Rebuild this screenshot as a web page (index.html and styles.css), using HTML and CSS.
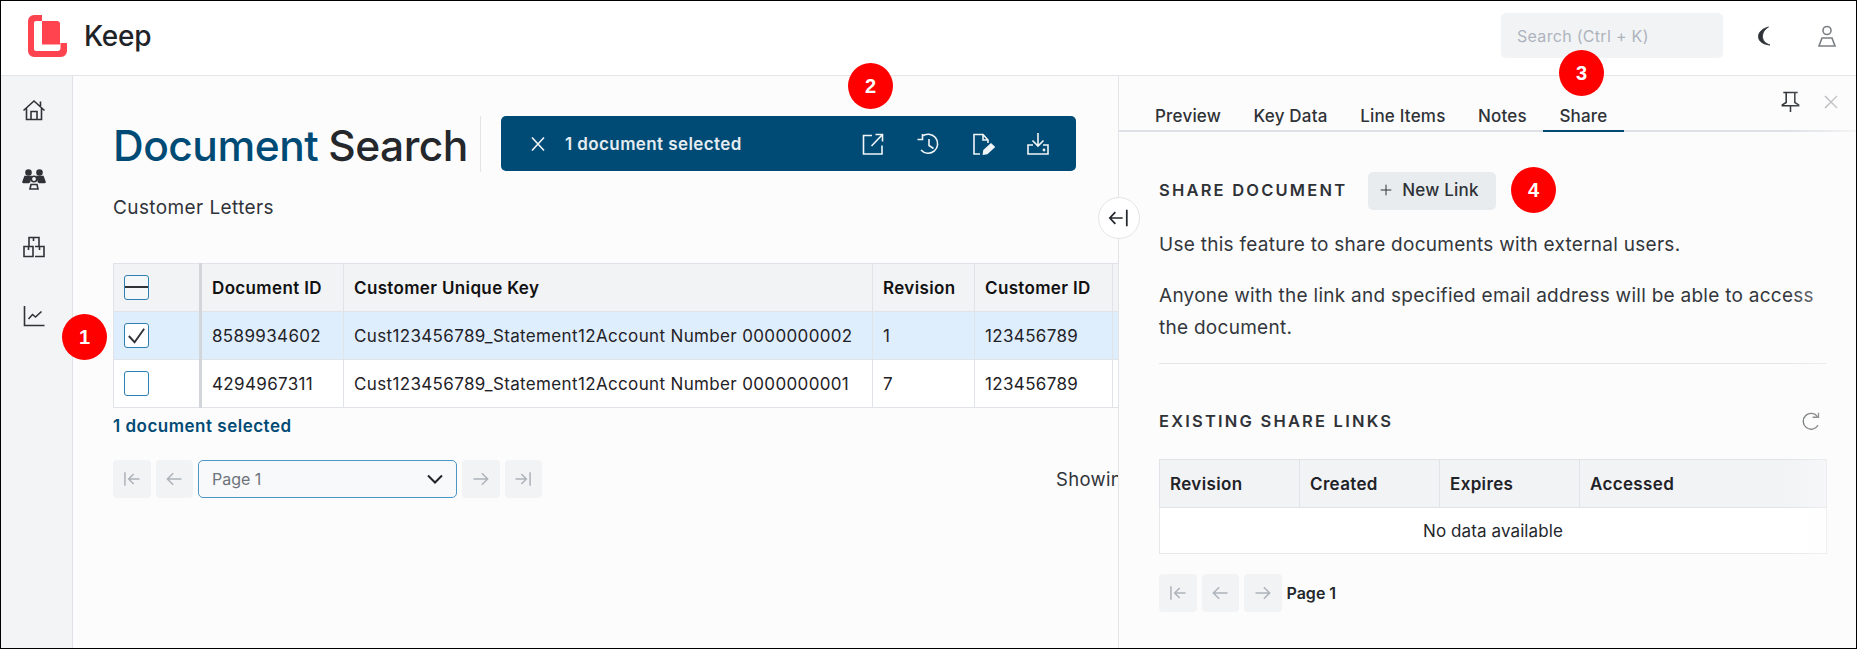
FILE: index.html
```html
<!DOCTYPE html>
<html lang="en">
<head>
<meta charset="utf-8">
<title>Keep - Document Search</title>
<link rel="stylesheet" href="styles.css">
</head>
<body>
<div class="frame">
  <header class="topbar">
    <svg class="logo" viewBox="28 14 39 42"><path fill="#ff444f" d="M42 14H34a6 6 0 0 0-6 6V50a6 6 0 0 0 6 6H61a6 6 0 0 0 6-6V42H60.500V47a3 3 0 0 1-3 3H36a2 2 0 0 1-2-2V22a2 2 0 0 1 2-2H42ZM42 20H57a3 3 0 0 1 3 3V43.500H42Z"/></svg>
    <span class="brand">Keep</span>
    <div class="search">Search (Ctrl + K)</div>
    <svg class="ico moon" viewBox="0 0 24 24"><path d="M15.500 3C9.500 4.500 5.500 8 5.500 12.500S9.500 20.500 17 21C12.500 19.500 9.500 16.500 9.500 12.500S11.500 5.500 15.500 3Z"/></svg>
    <svg class="ico user" viewBox="0 0 24 24"><circle cx="12" cy="6.500" r="4"/><path d="M7 14H17L20 22H4Z"/></svg>
  </header>
  <div class="workspace">
    <nav class="sidebar">
      <svg class="ico nav" viewBox="0 0 24 24"><path d="M1.500 12.500L12 3L22.500 12.500M4.500 10.500V21.500H19.500V10.500M9 21.500V13.500H15V21.500M18.500 8V3.500"/></svg>
      <svg class="ico nav" viewBox="0 0 24 24"><circle cx="6.500" cy="5.500" r="2.500" class="fill"/><circle cx="17.500" cy="5.500" r="2.500" class="fill"/><path class="fill" d="M1 15L3 9.500H9L7.500 15ZM23 15L21 9.500H15L16.500 15Z"/><circle cx="12" cy="12" r="2.700"/><path d="M8 22L9 17.500H15L16 22ZM1 15.500H7M17 15.500H23"/></svg>
      <svg class="ico nav" viewBox="0 0 24 24"><path d="M7 11V2.500H17V11M2 21.500V11.500H11V21.500ZM13 11.500H22V21.500H13M11.500 2.500V6M6.500 11.500V15M17.500 11.500V15"/></svg>
      <svg class="ico nav" viewBox="0 0 24 24"><path d="M2.500 2V21.500H22.500M6.500 15L10.500 10.500L13.500 13L19.500 7.500"/></svg>
    </nav>
    <main class="content">
      <div class="title-row">
        <h1 class="title"><span class="accent">Document</span> <span>Search</span></h1>
        <div class="action-bar">
          <svg class="ico light close" viewBox="0 0 24 24"><path d="M6 5.500L18 18.500M18 5.500L6 18.500"/></svg>
          <span class="action-text">1 document selected</span>
          <div class="action-icons">
            <svg class="ico light" viewBox="0 0 24 24"><path d="M11 3.500H2.500V22H21V13.500M10.500 14L21.500 2.500M14.500 2.500H21.500V9.500"/></svg>
            <svg class="ico light" viewBox="0 0 24 24"><path d="M6 4.500A9.500 9.500 0 1 1 5 18M6.500 2V7.500H1.500M13 7V13.500L17.500 16.500"/></svg>
            <svg class="ico light" viewBox="0 0 24 24"><path d="M9 22H3V2.500H12L17 8V11M12 2.500V8H17"/><path class="fill" d="M12.500 22L13 18.500L20 12L23 15L16 21.500Z"/></svg>
            <svg class="ico light" viewBox="0 0 24 24"><path d="M12 1V14M6.500 8.500L12 14L17.500 8.500M7 13H2V22H22V13H17"/><circle cx="18" cy="18" r=".6"/></svg>
          </div>
        </div>
      </div>
      <p class="subtitle">Customer Letters</p>
      <div class="table-clip">
        <table class="doc-table">
          <colgroup>
            <col class="c-chk"><col class="c-id"><col class="c-key"><col class="c-rev"><col class="c-cust"><col class="c-rest">
          </colgroup>
          <thead>
            <tr>
              <th class="chk-cell"><span class="check"><span class="dash"></span></span></th>
              <th>Document ID</th><th>Customer Unique Key</th><th>Revision</th><th>Customer ID</th><th></th>
            </tr>
          </thead>
          <tbody>
            <tr class="selected">
              <td class="chk-cell"><span class="check"><svg class="tick" viewBox="0 0 24 24"><path d="M4 12.500L10 19L20 5"/></svg></span></td>
              <td>8589934602</td><td>Cust123456789_Statement12Account Number 0000000002</td><td>1</td><td>123456789</td><td></td>
            </tr>
            <tr>
              <td class="chk-cell"><span class="check"></span></td>
              <td>4294967311</td><td>Cust123456789_Statement12Account Number 0000000001</td><td>7</td><td>123456789</td><td></td>
            </tr>
          </tbody>
        </table>
      </div>
      <p class="selected-note">1 document selected</p>
      <div class="pager-row">
        <span class="pg-btn"><svg class="ico pg" viewBox="0 0 24 24"><path d="M3.500 4V20M21 12H8M14 6L8 12L14 18"/></svg></span>
        <span class="pg-btn"><svg class="ico pg" viewBox="0 0 24 24"><path d="M21 12H4M11 5L4 12L11 19"/></svg></span>
        <div class="page-select"><span>Page 1</span><svg class="ico chev" viewBox="0 0 24 24"><path d="M5 8.500L12 15.500L19 8.500"/></svg></div>
        <span class="pg-btn"><svg class="ico pg" viewBox="0 0 24 24"><path d="M3 12H20M13 5L20 12L13 19"/></svg></span>
        <span class="pg-btn"><svg class="ico pg" viewBox="0 0 24 24"><path d="M20.500 4V20M3 12H16M10 6L16 12L10 18"/></svg></span>
        <span class="showing">Showing</span>
      </div>
    </main>
    <aside class="panel">
      <div class="tabs">
        <span class="tab">Preview</span>
        <span class="tab">Key Data</span>
        <span class="tab">Line Items</span>
        <span class="tab">Notes</span>
        <span class="tab active">Share</span>
        <div class="panel-tools">
          <svg class="ico pin" viewBox="0 0 24 24"><path d="M4.500 2.500H19.500M7.500 2.500V13L3.500 15.500V16.500H20.500V15.500L16.500 13V2.500M12 16.500V23"/></svg>
          <svg class="ico dismiss" viewBox="0 0 24 24"><path d="M4 4L20 20M20 4L4 20"/></svg>
        </div>
      </div>
      <div class="panel-body">
        <div class="section-head">
          <h2 class="section-title">SHARE DOCUMENT</h2>
          <span class="new-link"><svg class="ico plus" viewBox="0 0 24 24"><path d="M12 4V20M4 12H20"/></svg>New Link</span>
        </div>
        <p class="para">Use this feature to share documents with external users.</p>
        <p class="para">Anyone with the link and specified email address will be able to access the document.</p>
        <hr class="rule">
        <div class="links-head">
          <h2 class="section-title">EXISTING SHARE LINKS</h2>
          <svg class="ico refresh" viewBox="0 0 24 24"><path d="M20 7A9.500 9.500 0 1 0 20.500 17M14 7.500H21V2"/></svg>
        </div>
        <table class="links-table">
          <colgroup><col class="l-col"><col class="l-col"><col class="l-col"><col></colgroup>
          <thead><tr><th>Revision</th><th>Created</th><th>Expires</th><th>Accessed</th></tr></thead>
          <tbody><tr><td colspan="4" class="empty">No data available</td></tr></tbody>
        </table>
        <div class="links-pager">
          <span class="pg-btn"><svg class="ico pg" viewBox="0 0 24 24"><path d="M3.500 4V20M21 12H8M14 6L8 12L14 18"/></svg></span>
          <span class="pg-btn"><svg class="ico pg" viewBox="0 0 24 24"><path d="M21 12H4M11 5L4 12L11 19"/></svg></span>
          <span class="pg-btn"><svg class="ico pg" viewBox="0 0 24 24"><path d="M3 12H20M13 5L20 12L13 19"/></svg></span>
          <span class="page-label">Page 1</span>
        </div>
      </div>
      <div class="fade"></div>
    </aside>
  </div>
  <div class="collapse"><svg class="ico arrow" viewBox="0 0 24 24"><path d="M16 12H2M8 5.500L2 12L8 18.500M20.500 3V21"/></svg></div>
  <span class="badge b1">1</span>
  <span class="badge b2">2</span>
  <span class="badge b3">3</span>
  <span class="badge b4">4</span>
</div>
</body>
</html>
```
FILE: styles.css
```css
* { box-sizing: border-box; }
html, body { margin: 0; padding: 0; }
body { font-family: Inter, "Liberation Sans", sans-serif; color: #24272b; background: #fff; }
.frame { position: relative; width: 1857px; height: 649px; border: 1px solid #000; overflow: hidden; display: flex; flex-direction: column; background: #fcfcfc; }

.ico { width: 24px; height: 24px; flex: none; fill: none; stroke: #2f3237; stroke-width: 1.6; }
.ico .fill, .ico.light .fill { fill: currentColor; }

.topbar { flex: none; height: 75px; padding: 0 17px 5px 27px; display: flex; align-items: center; background: #fff; border-bottom: 1px solid #e3e5e8; }
.logo { width: 39px; height: 42px; flex: none; }
.brand { margin-left: 17px; font-size: 28px; font-weight: 550; color: #1f2227; letter-spacing: -.3px; }
.search { margin-left: auto; width: 222px; height: 45px; padding-left: 16px; display: flex; align-items: center; background: #f2f3f5; border-radius: 5px; font-size: 16px; letter-spacing: .3px; color: #adb4bd; }
.moon { margin-left: 30px; fill: #2f3237; stroke-width: .8; }
.user { margin-left: 38px; stroke: #7c7f83; }

.workspace { flex: 1; min-height: 0; display: flex; }
.sidebar { flex: none; width: 72px; padding-top: 22px; display: flex; flex-direction: column; align-items: center; gap: 44.500px; background: #f3f4f6; border-right: 1px solid #dfe2e6; }
.nav { color: #2f3237; margin-right: 6px; }

.content { flex: none; width: 1045px; padding: 40px 0 0 40px; overflow: hidden; }
.title-row { display: flex; height: 56px; align-items: flex-start; }
.title { margin: 0; width: 368px; height: 56px; padding-top: 2px; display: flex; align-items: center; gap: 10px; border-right: 1px solid #e3e5e8; font-size: 42.500px; font-weight: 550; letter-spacing: -.5px; color: #24272b; white-space: nowrap; }
.accent { color: #004b75; }
.action-bar { margin-left: 20px; width: 575px; height: 55px; padding: 0 26px 0 25px; display: flex; align-items: center; background: #004b75; border-radius: 5px; }
.light { stroke: #f1f5f8; color: #f1f5f8; }
.action-text { margin-left: 15px; font-size: 17px; letter-spacing: .4px; font-weight: 600; color: #e4ecf1; }
.action-icons { margin-left: auto; display: flex; gap: 31px; }

.subtitle { margin: 24px 0 0; line-height: 24px; font-size: 19px; letter-spacing: .4px; color: #30343a; }

.table-clip { margin-top: 43px; overflow: hidden; }
.doc-table { width: 1200px; table-layout: fixed; border-collapse: collapse; font-size: 17px; letter-spacing: .35px; }
.c-chk { width: 87px; }
.c-id { width: 143px; }
.c-key { width: 529px; }
.c-rev { width: 102px; }
.c-cust { width: 138px; }
.c-rest { width: 201px; }
.doc-table th, .doc-table td { height: 48px; padding: 0 0 0 10px; text-align: left; border: 1px solid #e0e3e7; white-space: nowrap; color: #1f2227; }
.doc-table th { background: #f2f3f5; font-weight: 600; color: #111; }
.doc-table td { background: #fff; font-weight: 400; }
.doc-table .selected td { background: #dfeefd; }
.doc-table .chk-cell { padding-left: 10px; border-right: 3px solid #d2d5d9; }
.check { display: block; width: 25px; height: 25px; position: relative; border: 1px solid #2d7fb2; border-radius: 3px; background: #fff; }
.doc-table th .check { background: #f6f7f8; }
.dash { position: absolute; left: 0; right: 0; top: 10px; height: 2px; background: #2f3237; }
.tick { display: block; width: 23px; height: 23px; fill: none; stroke: #2f3237; stroke-width: 2; }

.selected-note { margin: 7px 0 0; line-height: 22px; font-size: 17px; letter-spacing: .5px; font-weight: 600; color: #004b75; }

.pager-row { margin-top: 23px; display: flex; gap: 5px; align-items: center; }
.pg-btn { flex: none; width: 37.500px; height: 38px; display: flex; align-items: center; justify-content: center; background: #f2f3f5; border-radius: 4px; }
.pg { width: 20px; height: 20px; stroke: #adb3ba; stroke-width: 1.8; }
.page-select { flex: none; width: 259px; height: 38px; padding: 0 9px 0 13px; display: flex; align-items: center; justify-content: space-between; background: #f8f9fa; border: 1px solid #4a96c4; border-radius: 5px; font-size: 16px; color: #6d737b; }
.chev { width: 24px; height: 24px; stroke: #1f2227; stroke-width: 2; }
.showing { margin-left: 509px; font-size: 18.500px; letter-spacing: .3px; color: #30343a; white-space: nowrap; }

.panel { flex: none; position: relative; width: 738px; background: #fcfcfc; border-left: 1px solid #e3e5e8; overflow: hidden; }
.tabs { height: 56px; padding-left: 20px; display: flex; align-items: flex-end; border-bottom: 2px solid #dde1e6; }
.tab { height: 30px; margin-bottom: -2px; margin-right: .5px; padding: 0 16px; line-height: 29px; border-bottom: 2px solid transparent; font-size: 17px; letter-spacing: .2px; font-weight: 500; color: #2f3237; }
.tab.active { border-bottom-color: #004b75; }
.panel-tools { align-self: flex-start; margin: 14px 16px 0 auto; display: flex; gap: 20px; align-items: center; }
.pin { width: 23px; height: 23px; stroke-width: 1.6; }
.dismiss { width: 18px; height: 18px; stroke: #8a8e93; stroke-width: 1.8; }

.panel-body { padding: 40px 29px 0 40px; }
.section-head { display: flex; align-items: center; height: 38px; gap: 21px; }
.section-head .section-title { margin-bottom: 2px; }
.section-title { margin: 0; font-size: 16.500px; font-weight: 600; letter-spacing: 2.200px; color: #2f3237; white-space: nowrap; }
.new-link { width: 128px; height: 38px; padding: 0 0 2px 10px; display: flex; align-items: center; gap: 8px; background: #e9ecef; border-radius: 5px; font-size: 17px; letter-spacing: .2px; font-weight: 500; color: #2f3237; }
.plus { width: 16px; height: 16px; stroke-width: 1.500; }
.para { margin: 19px 0 0; line-height: 32px; font-size: 19px; letter-spacing: .27px; color: #33373c; }
.rule { margin: 19px 0 0; border: 0; border-top: 1px solid #e3e5e8; }
.links-head { margin-top: 45px; height: 24px; display: flex; align-items: center; justify-content: space-between; padding-right: 6px; }
.refresh { width: 20px; height: 20px; stroke: #5f6367; }
.links-table { margin-top: 26px; width: 668px; table-layout: fixed; border-collapse: collapse; font-size: 17px; letter-spacing: .35px; }
.l-col { width: 140px; }
.links-table th { height: 48px; padding: 0 0 0 10px; text-align: left; background: #f2f3f5; border: 1px solid #e0e3e7; font-weight: 600; color: #1f2227; }
.empty { height: 46px; padding: 0; text-align: center; letter-spacing: .1px; background: #fff; border: 1px solid #e6e8eb; color: #24272b; }
.links-pager { margin-top: 20px; display: flex; gap: 5px; align-items: center; }
.page-label { font-size: 16px; font-weight: 600; color: #24272b; }
.fade { position: absolute; top: 0; bottom: 0; right: 0; width: 70px; pointer-events: none; background: linear-gradient(to right, rgba(252,252,252,0), rgba(252,252,252,.7)); }

.collapse { position: absolute; left: 1097px; top: 196px; width: 42px; height: 42px; display: flex; align-items: center; justify-content: center; background: #fff; border: 1px solid #e3e5e8; border-radius: 50%; }
.arrow { width: 22px; height: 22px; stroke: #24272b; stroke-width: 1.9; }

.badge { position: absolute; width: 45px; height: 46px; display: flex; align-items: center; justify-content: center; background: #f00; border-radius: 50%; font-family: "Liberation Sans", sans-serif; font-size: 20px; font-weight: 700; color: #fff; }
.b1 { left: 61px; top: 313px; }
.b2 { left: 847px; top: 62px; }
.b3 { left: 1558px; top: 49px; }
.b4 { left: 1510px; top: 166px; }
```
